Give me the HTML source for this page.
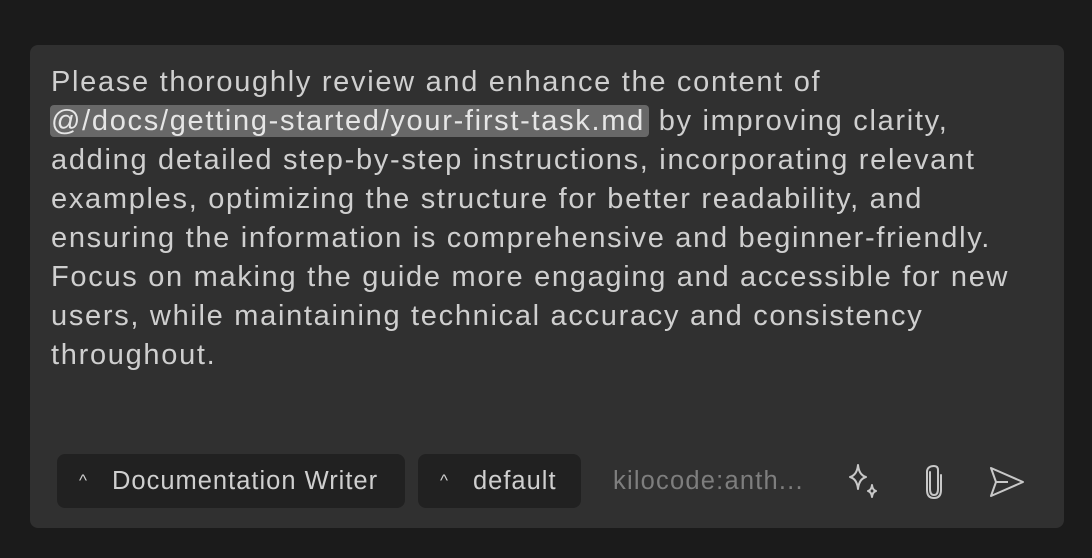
<!DOCTYPE html>
<html><head><style>
html,body{margin:0;padding:0;background:#1b1b1b;width:1092px;height:558px;overflow:hidden;font-family:"Liberation Sans",sans-serif}
.card{position:absolute;left:30px;top:45px;width:1034px;height:483px;background:#303030;border-radius:8px}
.t{position:absolute;left:51px;top:63px;color:#cfcfcf;font-size:29px;letter-spacing:1.7px;line-height:39px;white-space:nowrap}
.t div{height:39px}
.hl{background:#686868;border-radius:4px;padding:0 4px 0 1px;margin-left:-1px;color:#e6e6e6}
.btn{position:absolute;top:454px;height:54px;background:#212121;border-radius:8px;color:#cfcfcf;font-size:25.5px;letter-spacing:1px;line-height:54px;box-sizing:border-box;white-space:nowrap}
.car{display:inline-block;font-size:17px;margin:0 24px 0 22px;vertical-align:top}
.k{position:absolute;left:613px;top:454px;line-height:54px;font-size:25.5px;letter-spacing:1.2px;color:#7e7e7e}
svg{position:absolute}
</style></head><body>
<div class="card"></div>
<div class="t">
<div>Please thoroughly review and enhance the content of</div>
<div><span class="hl">@/docs/getting-started/your-first-task.md</span> by improving clarity,</div>
<div>adding detailed step-by-step instructions, incorporating relevant</div>
<div>examples, optimizing the structure for better readability, and</div>
<div>ensuring the information is comprehensive and beginner-friendly.</div>
<div>Focus on making the guide more engaging and accessible for new</div>
<div>users, while maintaining technical accuracy and consistency</div>
<div>throughout.</div>
</div>
<div class="btn" style="left:57px;width:348px"><span class="car">^</span>Documentation Writer</div>
<div class="btn" style="left:418px;width:163px"><span class="car">^</span>default</div>
<div class="k">kilocode:anth...</div>
<svg style="left:844px;top:463px" width="40" height="40" viewBox="0 0 40 40" fill="none" stroke="#c8c8c8" stroke-width="2" stroke-linejoin="round">
<path d="M14 2 Q15 12 22 14 Q15 16 14 26 Q13 16 6 14 Q13 12 14 2Z"/>
<path d="M28 22 Q28.5 27 32 28 Q28.5 29 28 34 Q27.5 29 24 28 Q27.5 27 28 22Z"/>
</svg>
<svg style="left:922px;top:463px" width="24" height="38" viewBox="0 0 24 38" fill="none" stroke="#c8c8c8" stroke-width="2" stroke-linecap="round">
<path d="M8 9 V26 Q8 32 12 32 Q16 32 16 26 V7 Q16 3 12 3 Q6 3 5 8 V27 Q5 35 12 35 Q19 35 19 27 V12"/>
</svg>
<svg style="left:988px;top:465px" width="38" height="34" viewBox="0 0 38 34" fill="none" stroke="#c8c8c8" stroke-width="2" stroke-linejoin="round">
<path d="M3 3 L35 17 L3 31 L8 17 Z M8 17 H20"/>
</svg>
</body></html>
